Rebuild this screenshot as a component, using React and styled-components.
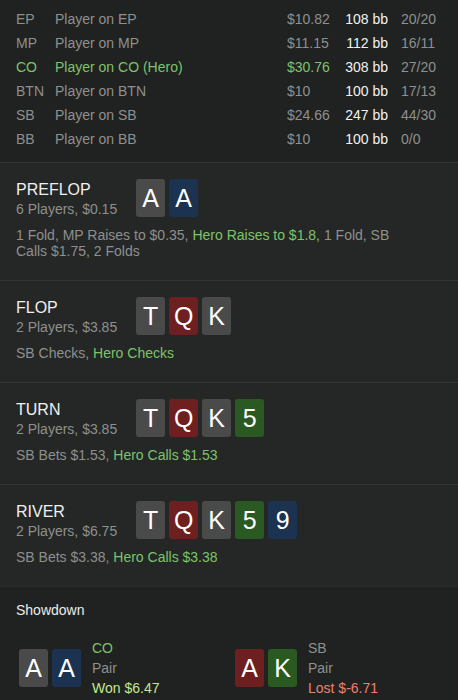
import React from 'react';
import styled, {createGlobalStyle} from 'styled-components';

const GlobalStyle = createGlobalStyle`
  body {
    margin: 0;
    background: #1f2220;
    font-family: "Liberation Sans", Arial, sans-serif;
  }
`

const players = [
    {pos: 'EP', name: 'Player on EP', stack: '$10.82', bb: '108 bb', stats: '20/20'},
    {pos: 'MP', name: 'Player on MP', stack: '$11.15', bb: '112 bb', stats: '16/11'},
    {pos: 'CO', name: 'Player on CO (Hero)', stack: '$30.76', bb: '308 bb', stats: '27/20', hero: true},
    {pos: 'BTN', name: 'Player on BTN', stack: '$10', bb: '100 bb', stats: '17/13'},
    {pos: 'SB', name: 'Player on SB', stack: '$24.66', bb: '247 bb', stats: '44/30'},
    {pos: 'BB', name: 'Player on BB', stack: '$10', bb: '100 bb', stats: '0/0'},
];

const streets = [
    {
        name: 'PREFLOP', info: '6 Players, $0.15',
        cards: [['A', 'gray'], ['A', 'blue']],
        actions: [['1 Fold, MP Raises to $0.35, '], ['Hero Raises to $1.8,', true], [' 1 Fold, SB '], ['Calls $1.75, 2 Folds']],
    },
    {
        name: 'FLOP', info: '2 Players, $3.85',
        cards: [['T', 'gray'], ['Q', 'red'], ['K', 'gray']],
        actions: [['SB Checks, '], ['Hero Checks', true]],
    },
    {
        name: 'TURN', info: '2 Players, $3.85',
        cards: [['T', 'gray'], ['Q', 'red'], ['K', 'gray'], ['5', 'green']],
        actions: [['SB Bets $1.53, '], ['Hero Calls $1.53', true]],
    },
    {
        name: 'RIVER', info: '2 Players, $6.75',
        cards: [['T', 'gray'], ['Q', 'red'], ['K', 'gray'], ['5', 'green'], ['9', 'blue']],
        actions: [['SB Bets $3.38, '], ['Hero Calls $3.38', true]],
    },
];

const hands = [
    {pos: 'CO', hero: true, cards: [['A', 'gray'], ['A', 'blue']], rank: 'Pair', result: 'Won $6.47', won: true},
    {pos: 'SB', cards: [['A', 'red'], ['K', 'green']], rank: 'Pair', result: 'Lost $-6.71'},
];

const Cards = ({cards}) => (
    <CardRow>
        {cards.map(([rank, suit], i) => <Card key={i} suit={suit}>{rank}</Card>)}
    </CardRow>
)

const App = () => {
    return(
        <Page>
            <GlobalStyle/>
            <PlayerTable>
                {players.map(p => (
                    <PlayerRow key={p.pos} $hero={p.hero}>
                        <span>{p.pos}</span>
                        <span>{p.name}</span>
                        <span>{p.stack}</span>
                        <BigBlinds>{p.bb}</BigBlinds>
                        <Stats>{p.stats}</Stats>
                    </PlayerRow>
                ))}
            </PlayerTable>

            {streets.map(s => (
                <Street key={s.name}>
                    <StreetHeader>
                        <StreetTitle>
                            <StreetName>{s.name}</StreetName>
                            <StreetInfo>{s.info}</StreetInfo>
                        </StreetTitle>
                        <Cards cards={s.cards}/>
                    </StreetHeader>
                    <Actions>
                        {s.actions.map(([text, hero], i) => hero ? <Hero key={i}>{text}</Hero> : <span key={i}>{text}</span>)}
                    </Actions>
                </Street>
            ))}

            <Showdown>
                <ShowdownLabel>Showdown</ShowdownLabel>
                <Hands>
                    {hands.map(h => (
                        <Hand key={h.pos}>
                            <Cards cards={h.cards}/>
                            <HandText>
                                <HandPos $hero={h.hero}>{h.pos}</HandPos>
                                <span>{h.rank}</span>
                                <HandResult $won={h.won}>{h.result}</HandResult>
                            </HandText>
                        </Hand>
                    ))}
                </Hands>
            </Showdown>
        </Page>
    )
}
export default App;

const suitColors = {
    gray: '#4a4a4a',
    red: '#6e2020',
    green: '#2a5a22',
    blue: '#1b3350',
}

const Page = styled.div`
    width: 458px;
    min-height: 700px;
    background: #1f2220;
    color: #8e908e;
    font-size: 14px;
`

const PlayerTable = styled.div`
    padding: 7px 16px 11px 16px;
`

const PlayerRow = styled.div`
    display: grid;
    grid-template-columns: 39px 1fr 58px 43px 54px;
    height: 24px;
    align-items: center;
    white-space: nowrap;
    color: ${p => p.$hero ? '#7cc46a' : '#8e908e'};
`

const BigBlinds = styled.span`
    color: #f2f2f2;
    text-align: right;
`

const Stats = styled.span`
    color: #8e908e;
    padding-left: 13px;
`

const Street = styled.div`
    background: #242725;
    border-top: 1px solid #323532;
    padding: 16px 16px 21px 16px;
`

const StreetHeader = styled.div`
    display: flex;
    align-items: flex-start;
    gap: 19px;
`

const StreetTitle = styled.div`
    display: flex;
    flex-direction: column;
`

const StreetName = styled.div`
    color: #f0f0f0;
    font-size: 16px;
    line-height: 20px;
    margin-top: 1px;
`

const StreetInfo = styled.div`
    line-height: 18px;
    white-space: nowrap;
`

const CardRow = styled.div`
    display: flex;
    gap: 4px;
`

const Card = styled.div`
    width: 29px;
    height: 38px;
    border-radius: 3px;
    background: ${p => suitColors[p.suit]};
    color: #ffffff;
    font-size: 25px;
    display: flex;
    align-items: center;
    justify-content: center;
`

const Actions = styled.div`
    margin-top: 9px;
    line-height: 16px;
    max-width: 395px;
`

const Hero = styled.span`
    color: #7cc46a;
`

const Showdown = styled.div`
    background: #1f2220;
    border-top: 1px solid #2a2d2a;
    padding: 13px 16px 0 16px;
`

const ShowdownLabel = styled.div`
    color: #ececec;
    line-height: 20px;
`

const Hands = styled.div`
    display: grid;
    grid-template-columns: 216px 1fr;
    margin-top: 18px;
    padding-left: 3px;
`

const Hand = styled.div`
    display: flex;
    align-items: center;
    gap: 11px;
`

const HandText = styled.div`
    display: flex;
    flex-direction: column;
    line-height: 20px;
`

const HandPos = styled.span`
    color: ${p => p.$hero ? '#7cc46a' : '#8e908e'};
`

const HandResult = styled.span`
    color: ${p => p.$won ? '#c3e88f' : '#e8826f'};
`
